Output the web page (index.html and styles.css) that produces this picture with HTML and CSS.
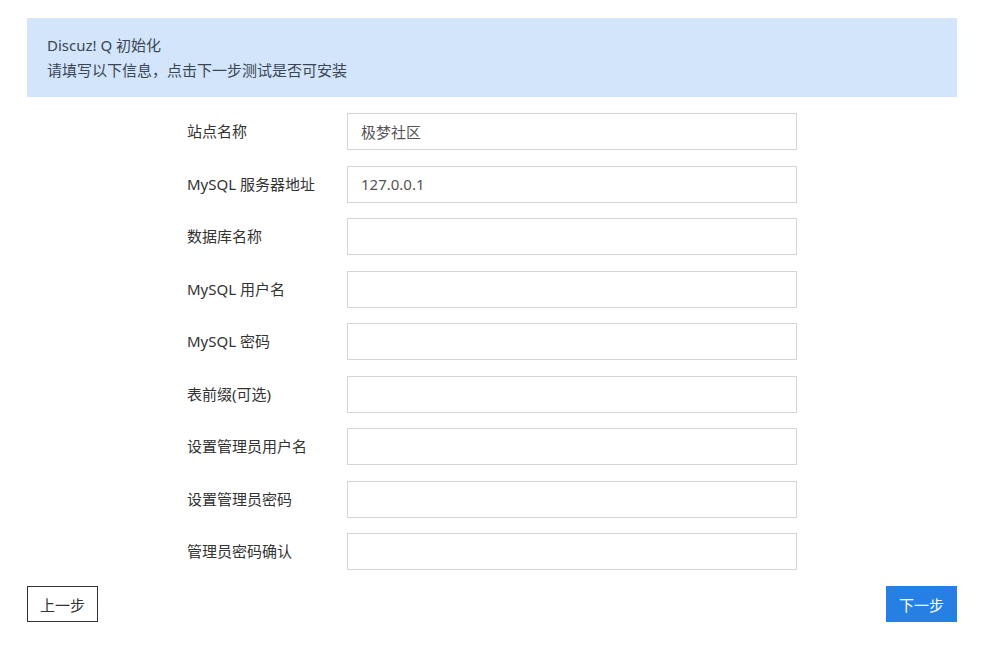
FILE: index.html
```html
<!DOCTYPE html>
<html lang="zh-CN">
<head>
<meta charset="utf-8">
<title>Discuz! Q 初始化</title>
<link rel="stylesheet" href="styles.css">
</head>
<body>
<div class="page">
  <div class="notice">
    <div class="notice-line">Discuz! Q 初始化</div>
    <div class="notice-line">请填写以下信息，点击下一步测试是否可安装</div>
  </div>
  <form class="form">
    <div class="row"><label class="label">站点名称</label><input class="input" type="text" value="极梦社区"></div>
    <div class="row"><label class="label">MySQL 服务器地址</label><input class="input" type="text" value="127.0.0.1"></div>
    <div class="row"><label class="label">数据库名称</label><input class="input" type="text"></div>
    <div class="row"><label class="label">MySQL 用户名</label><input class="input" type="text"></div>
    <div class="row"><label class="label">MySQL 密码</label><input class="input" type="password"></div>
    <div class="row"><label class="label">表前缀(可选)</label><input class="input" type="text"></div>
    <div class="row"><label class="label">设置管理员用户名</label><input class="input" type="text"></div>
    <div class="row"><label class="label">设置管理员密码</label><input class="input" type="password"></div>
    <div class="row"><label class="label">管理员密码确认</label><input class="input" type="password"></div>
  </form>
  <div class="actions">
    <button class="btn btn-prev" type="button">上一步</button>
    <button class="btn btn-next" type="button">下一步</button>
  </div>
</div>
</body>
</html>
```
FILE: styles.css
```css
html, body {
  margin: 0;
  padding: 0;
  background: #fff;
}
body {
  font-family: "Noto Sans", "Noto Sans CJK SC", sans-serif;
  font-size: 15px;
  color: #333;
}
.page {
  width: 930px;
  margin-left: 27px;
  padding-top: 18px;
}
.notice {
  background: #d3e5fa;
  height: 79px;
  box-sizing: border-box;
  padding: 15px 20px 0;
  color: #3a4556;
}
.notice-line {
  line-height: 25px;
}
.form {
  width: 610px;
  margin: 16px auto 0;
  display: flex;
  flex-direction: column;
  gap: 15.5px;
}
.row {
  display: flex;
  align-items: center;
}
.label {
  width: 160px;
  flex: none;
  color: #333;
  line-height: 20px;
  padding-bottom: 1px;
}
.input {
  width: 450px;
  height: 37px;
  box-sizing: border-box;
  border: 1px solid #d2d5da;
  padding: 0 13px;
  font: inherit;
  color: #555;
  outline: none;
  background: #fff;
}
.actions {
  display: flex;
  justify-content: space-between;
  margin-top: 16px;
}
.btn {
  height: 36px;
  box-sizing: border-box;
  padding: 0;
  font: inherit;
  font-size: 15px;
  cursor: pointer;
}
.btn-prev {
  width: 71px;
  background: #fff;
  border: 1px solid #333;
  color: #333;
}
.btn-next {
  width: 71px;
  background: #2680e3;
  border: 1px solid #2680e3;
  color: #fff;
}
```
